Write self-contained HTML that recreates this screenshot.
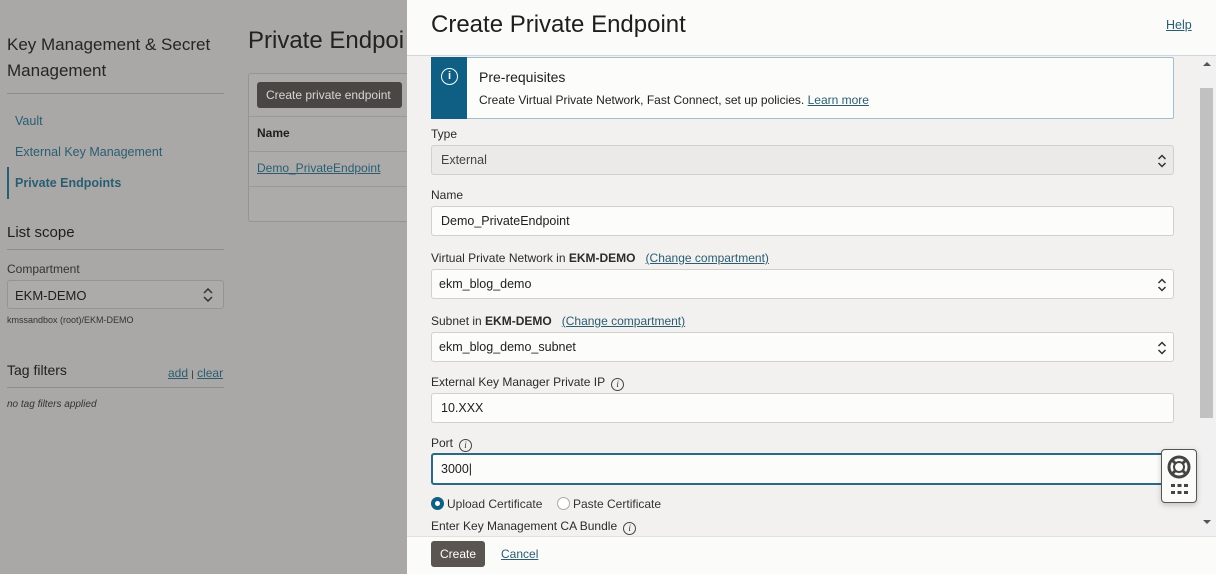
<!DOCTYPE html>
<html><head><meta charset="utf-8"><style>
*{box-sizing:border-box;margin:0;padding:0}
body{width:1216px;height:574px;overflow:hidden;background:#a9a8a7;font-family:"Liberation Sans",sans-serif;color:#1e1e1e;position:relative}
.a{position:absolute}
.lnk{color:#2b5d72;text-decoration:underline}
.hr{position:absolute;height:1px;background:#8e8d8b}
.panel{position:absolute;left:407px;top:0;width:809px;height:574px;background:#f2f1ef}
.lbl{position:absolute;left:24px;font-size:12px;color:#2b2b2b}
.inp{position:absolute;left:24px;width:743px;height:30px;background:#fcfcfb;border:1px solid #d2d0cd;border-radius:3px;font-size:12.5px;padding:7px 9px;color:#1e1e1e}
.car{position:absolute;right:6px;top:7px;width:10px;height:16px}
.info{display:inline-block;width:13px;height:13px;border:1px solid #444;border-radius:50%;font-size:9px;text-align:center;line-height:11px;font-style:italic;margin-left:6px;vertical-align:-1px;font-family:"Liberation Serif",serif}
</style></head><body>
<div class="a" style="left:7px;top:32px;font-size:17px;line-height:26px;color:#252525">Key Management &amp; Secret<br>Management</div>
<div class="hr" style="left:7px;top:93px;width:217px"></div>
<div class="a lnk" style="left:15px;top:114px;font-size:12.5px;text-decoration:none">Vault</div>
<div class="a lnk" style="left:15px;top:145px;font-size:12.5px;text-decoration:none">External Key Management</div>
<div class="a" style="left:7px;top:167px;width:2px;height:32px;background:#2b5d72"></div>
<div class="a lnk" style="left:15px;top:176px;font-size:12.5px;font-weight:bold;text-decoration:none">Private Endpoints</div>
<div class="a" style="left:7px;top:224px;font-size:15px">List scope</div>
<div class="hr" style="left:7px;top:249px;width:217px"></div>
<div class="a" style="left:7px;top:262px;font-size:12px;color:#333">Compartment</div>
<div class="a" style="left:7px;top:280px;width:217px;height:29px;border:1px solid #959492;border-radius:3px;background:#acabaa;font-size:13px;padding:7px 7px">EKM-DEMO
<svg class="a" style="right:10px;top:7px" width="10" height="14" viewBox="0 0 10 14"><path d="M1 5 5 1 9 5M1 9 5 13 9 9" fill="none" stroke="#333" stroke-width="1.5"/></svg></div>
<div class="a" style="left:7px;top:315px;font-size:9px;color:#333">kmssandbox (root)/EKM-DEMO</div>
<div class="a" style="left:7px;top:362px;font-size:14px">Tag filters</div>
<div class="a" style="left:168px;top:366px;font-size:12px"><span class="lnk">add</span> <span style="font-size:9px">|</span> <span class="lnk">clear</span></div>
<div class="hr" style="left:7px;top:387px;width:217px"></div>
<div class="a" style="left:7px;top:399px;font-size:10px;font-style:italic;color:#333">no tag filters applied</div>
<div class="a" style="left:248px;top:27px;font-size:24px;color:#222">Private Endpoi</div>
<div class="a" style="left:248px;top:73px;width:170px;height:149px;border:1px solid #959492;border-radius:3px;background:#acabaa"></div>
<div class="a" style="left:257px;top:82px;width:145px;height:26px;background:#4a4643;border-radius:3px;color:#d8d6d3;font-size:12px;padding:6px 9px;white-space:nowrap">Create private endpoint</div>
<div class="hr" style="left:249px;top:116px;width:158px;background:#9a9997"></div>
<div class="a" style="left:257px;top:126px;font-size:12px;font-weight:bold">Name</div>
<div class="hr" style="left:249px;top:151px;width:158px;background:#9a9997"></div>
<div class="a lnk" style="left:257px;top:161px;font-size:12px">Demo_PrivateEndpoint</div>
<div class="hr" style="left:249px;top:186px;width:158px;background:#9a9997"></div>

<div class="panel">
 <div class="a" style="left:0;top:0;width:809px;height:56px;background:#fbfbfa;border-bottom:1px solid #d0d6da"></div>
 <div class="a" style="left:24px;top:11px;font-size:24px;color:#1e1e1e">Create Private Endpoint</div>
 <div class="a lnk" style="left:759px;top:18px;font-size:12.5px">Help</div>
 <div class="a" style="left:791px;top:57px;width:18px;height:479px;background:#f1f1f1"></div>
 <div class="a" style="left:793px;top:88px;width:13px;height:330px;background:#c1c1c1"></div>
 <div class="a" style="left:796px;top:62px;width:0;height:0;border:4px solid transparent;border-bottom-color:#555;border-top:0"></div>
 <div class="a" style="left:796px;top:520px;width:0;height:0;border:4px solid transparent;border-top-color:#555;border-bottom:0"></div>
 <div class="a" style="left:24px;top:57px;width:743px;height:62px;background:#fcfcfb;border:1px solid #9fc0cf;border-radius:2px"></div>
 <div class="a" style="left:24px;top:57px;width:36px;height:62px;background:#0e5f83"></div>
 <div class="a" style="left:34px;top:68px;width:17px;height:17px;border:1.5px solid #fff;border-radius:50%;color:#fff;font-size:11px;font-weight:bold;text-align:center;line-height:14px">i</div>
 <div class="a" style="left:72px;top:69px;font-size:14px;color:#1e1e1e">Pre-requisites</div>
 <div class="a" style="left:72px;top:93px;font-size:12px;color:#222">Create Virtual Private Network, Fast Connect, set up policies. <span class="lnk">Learn more</span></div>

 <div class="lbl" style="top:127px">Type</div>
 <div class="inp" style="top:145px;background:#ebeae8;color:#444">External<svg class="car" viewBox="0 0 10 16"><path d="M1.5 6 5 2.5 8.5 6M1.5 10 5 13.5 8.5 10" fill="none" stroke="#333" stroke-width="1.5"/></svg></div>
 <div class="lbl" style="top:188px">Name</div>
 <div class="inp" style="top:206px">Demo_PrivateEndpoint</div>
 <div class="lbl" style="top:251px">Virtual Private Network in <b>EKM-DEMO</b> &nbsp;&nbsp;<span class="lnk">(Change compartment)</span></div>
 <div class="inp" style="top:269px;padding-left:7px">ekm_blog_demo<svg class="car" viewBox="0 0 10 16"><path d="M1.5 6 5 2.5 8.5 6M1.5 10 5 13.5 8.5 10" fill="none" stroke="#333" stroke-width="1.5"/></svg></div>
 <div class="lbl" style="top:314px">Subnet in <b>EKM-DEMO</b> &nbsp;&nbsp;<span class="lnk">(Change compartment)</span></div>
 <div class="inp" style="top:332px;padding-left:7px">ekm_blog_demo_subnet<svg class="car" viewBox="0 0 10 16"><path d="M1.5 6 5 2.5 8.5 6M1.5 10 5 13.5 8.5 10" fill="none" stroke="#333" stroke-width="1.5"/></svg></div>
 <div class="lbl" style="top:375px">External Key Manager Private IP<span class="info">i</span></div>
 <div class="inp" style="top:393px">10.XXX</div>
 <div class="lbl" style="top:436px">Port<span class="info">i</span></div>
 <div class="inp" style="top:453px;height:32px;border:2px solid #2b6a84;padding:7px 8px">3000|</div>
 <div class="a" style="left:24px;top:497px;width:13px;height:13px;border-radius:50%;background:#0e5f83"><div style="margin:4px;width:5px;height:5px;border-radius:50%;background:#fff"></div></div>
 <div class="a" style="left:40px;top:497px;font-size:12px;color:#333">Upload Certificate</div>
 <div class="a" style="left:150px;top:497px;width:13px;height:13px;border-radius:50%;border:1px solid #aaa;background:#fff"></div>
 <div class="a" style="left:166px;top:497px;font-size:12px;color:#333">Paste Certificate</div>
 <div class="lbl" style="top:519px;font-size:12px">Enter Key Management CA Bundle<span class="info">i</span></div>
 <div class="a" style="left:0;top:536px;width:809px;height:38px;background:#fbfbfa;border-top:1px solid #e2e1df"></div>
 <div class="a" style="left:24px;top:541px;width:54px;height:26px;background:#5b5551;border-radius:3px;color:#fff;font-size:12px;text-align:center;line-height:26px">Create</div>
 <div class="a lnk" style="left:94px;top:547px;font-size:12px">Cancel</div>
 <div class="a" style="left:754px;top:449px;width:36px;height:54px;background:#fbfbfa;border:1px solid #555;border-radius:4px;box-shadow:0 2px 6px rgba(0,0,0,.2)">
  <svg class="a" style="left:4px;top:4px" width="26" height="26" viewBox="0 0 26 26"><circle cx="13" cy="13" r="10" fill="none" stroke="#444" stroke-width="3"/><circle cx="13" cy="13" r="5" fill="none" stroke="#444" stroke-width="2"/><path d="M6 6l4 4M20 6l-4 4M6 20l4-4M20 20l-4-4" stroke="#444" stroke-width="3"/></svg>
  <svg class="a" style="left:9px;top:34px" width="17" height="10" viewBox="0 0 17 10"><g fill="#444"><rect x="0" y="0" width="4" height="3"/><rect x="6.5" y="0" width="4" height="3"/><rect x="13" y="0" width="4" height="3"/><rect x="0" y="7" width="4" height="3"/><rect x="6.5" y="7" width="4" height="3"/><rect x="13" y="7" width="4" height="3"/></g></svg>
 </div>
</div>
</body></html>
